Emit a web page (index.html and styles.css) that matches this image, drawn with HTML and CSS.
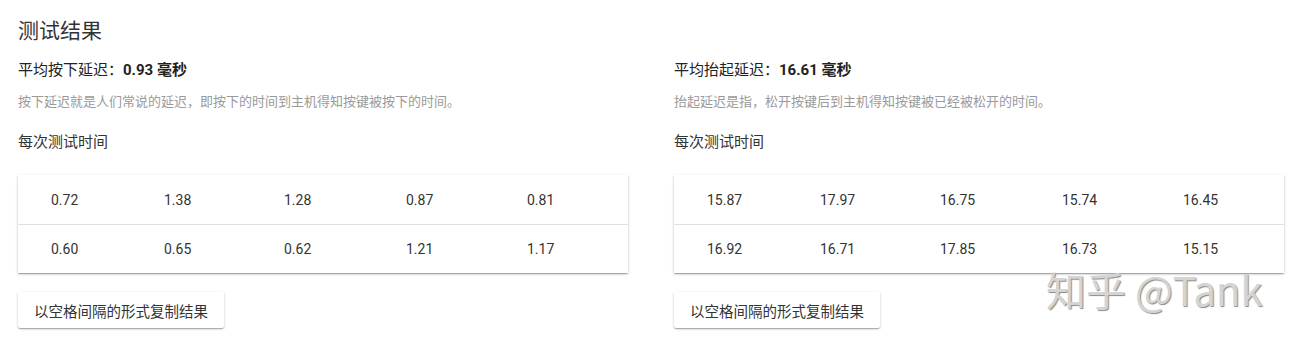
FILE: index.html
```html
<!DOCTYPE html>
<html lang="zh-CN">
<head>
<meta charset="utf-8">
<title>测试结果</title>
<link rel="stylesheet" href="styles.css">
</head>
<body>
<h1 class="title">测试结果</h1>
<div class="cols">
  <section class="col">
    <p class="avg">平均按下延迟：<b>0.93 毫秒</b></p>
    <p class="desc">按下延迟就是人们常说的延迟，即按下的时间到主机得知按键被按下的时间。</p>
    <p class="sub">每次测试时间</p>
    <div class="card">
      <div class="row"><span>0.72</span><span>1.38</span><span>1.28</span><span>0.87</span><span>0.81</span></div>
      <div class="row"><span>0.60</span><span>0.65</span><span>0.62</span><span>1.21</span><span>1.17</span></div>
    </div>
    <button class="btn">以空格间隔的形式复制结果</button>
  </section>
  <section class="col">
    <p class="avg">平均抬起延迟：<b>16.61 毫秒</b></p>
    <p class="desc">抬起延迟是指，松开按键后到主机得知按键被已经被松开的时间。</p>
    <p class="sub">每次测试时间</p>
    <div class="card">
      <div class="row"><span>15.87</span><span>17.97</span><span>16.75</span><span>15.74</span><span>16.45</span></div>
      <div class="row"><span>16.92</span><span>16.71</span><span>17.85</span><span>16.73</span><span>15.15</span></div>
    </div>
    <button class="btn">以空格间隔的形式复制结果</button>
  </section>
</div>
<div class="watermark">知乎 @Tank</div>
</body>
</html>
```

FILE: styles.css
```css
html, body {
  margin: 0;
  background: #fff;
}
body {
  padding: 14px 16px 0 18px;
  font-family: Roboto, "Noto Sans CJK SC", sans-serif;
  color: #333;
  position: relative;
  height: 347px;
  box-sizing: border-box;
  overflow: hidden;
}
.title {
  margin: 0 0 16px;
  font-family: "Noto Sans CJK SC", sans-serif;
  font-size: 21px;
  line-height: 30px;
  font-weight: 400;
  color: #333;
}
.cols {
  display: grid;
  grid-template-columns: 610px 610px;
  column-gap: 46px;
}
.col p { margin: 0; }
.avg {
  font-size: 15px;
  line-height: 20px;
  color: #222;
}
.avg b { font-weight: 700; }
.desc {
  margin-top: 11px !important;
  font-family: "Noto Sans CJK SC", sans-serif;
  font-size: 13px;
  line-height: 20px;
  color: #9a9a9a;
}
.sub {
  margin-top: 20px !important;
  font-family: "Noto Sans CJK SC", sans-serif;
  font-size: 15px;
  line-height: 20px;
  color: #333;
}
.card {
  margin-top: 24px;
  background: #fff;
  box-shadow: 0 1px 3px rgba(0,0,0,.2), 0 1px 1px rgba(0,0,0,.14), 0 2px 1px -1px rgba(0,0,0,.12);
}
.row {
  display: grid;
  grid-template-columns: 113px 120px 122px 121px 1fr;
  padding-left: 33px;
  height: 49px;
  align-items: center;
  font-size: 14px;
  color: #333;
}
.row + .row { border-top: 1px solid #e0e0e0; height: 48px; }
.btn {
  margin-top: 19px;
  height: 36px;
  padding: 0 16px;
  border: 0;
  background: #fff;
  font-family: "Noto Sans CJK SC", sans-serif;
  font-size: 14.5px;
  color: #333;
  border-radius: 2px;
  box-shadow: 0 1px 3px rgba(0,0,0,.2), 0 1px 1px rgba(0,0,0,.14), 0 2px 1px -1px rgba(0,0,0,.12);
  cursor: pointer;
}
.watermark {
  position: absolute;
  left: 1046px;
  top: 265px;
  font-size: 40px;
  line-height: 48px;
  color: #d4d4d4;
  text-shadow: 1px 1px 1px #8a8a8a;
  font-family: "Noto Sans CJK SC", sans-serif;
  white-space: nowrap;
}
```
